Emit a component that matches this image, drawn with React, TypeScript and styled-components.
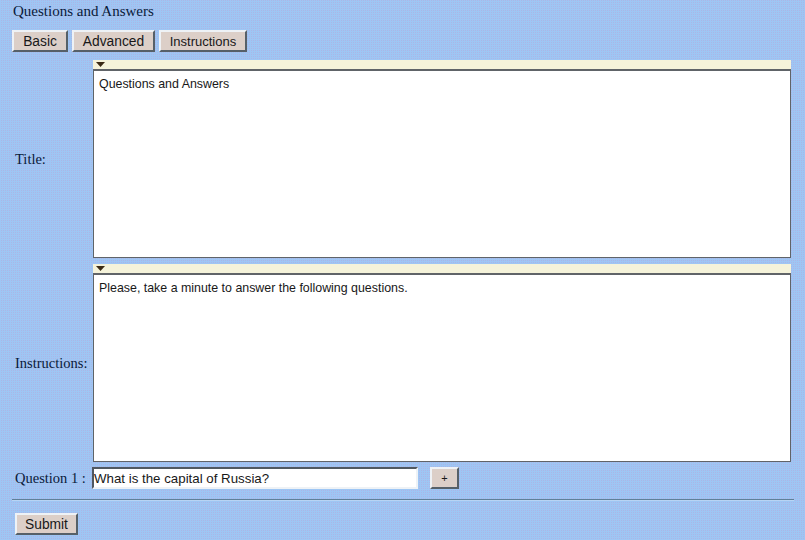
import React from "react";
import styled, { createGlobalStyle } from "styled-components";

const GlobalStyle = createGlobalStyle`
  html, body {
    margin: 0;
    padding: 0;
  }
  body {
    background-color: #9fc4f3;
    background-image: conic-gradient(#aab6e6 25%, #9ec6f4 0);
    background-size: 2px 2px;
    font-family: "Liberation Serif", serif;
    font-size: 14.5px;
    color: #0a1a3a;
  }
`;

const Page = styled.div`
  width: 805px;
  height: 540px;
  overflow: hidden;
  box-sizing: border-box;
  padding: 3px 11px 0 12px;
`;

const Heading = styled.div`
  height: 17px;
  line-height: 17px;
  padding-left: 1px;
  font-size: 15px;
`;

const Tabs = styled.div`
  display: flex;
  gap: 4px;
  margin-top: 10px;
`;

const Button = styled.button<{ $w: number; $fs?: number }>`
  width: ${(p) => p.$w}px;
  height: 22px;
  padding: 0;
  box-sizing: border-box;
  background: #dccfc8;
  border: 2px solid;
  border-color: #eef2f6 #566068 #566068 #eef2f6;
  font-family: "Liberation Sans", sans-serif;
  font-size: ${(p) => p.$fs ?? 13.5}px;
  color: #181818;
`;

const Row = styled.div<{ $top: number }>`
  display: flex;
  align-items: center;
  margin-top: ${(p) => p.$top}px;
`;

const Label = styled.div`
  width: 81px;
  padding: 1px 0 0 3px;
  box-sizing: border-box;
  white-space: nowrap;
`;

const Editor = styled.div`
  width: 698px;
  height: 198px;
  display: flex;
  flex-direction: column;
`;

const EditorBar = styled.div`
  height: 9px;
  flex: none;
  display: flex;
  align-items: center;
  padding-left: 3px;
  background: #f5f3da;
`;

const Editable = styled.div`
  flex: 1;
  background: #ffffff;
  border: 1px solid #606468;
  border-top-width: 2px;
  padding: 6px 5px;
  font-family: "Liberation Sans", sans-serif;
  font-size: 12.4px;
  line-height: 15px;
  color: #181818;
`;

const QuestionInput = styled.div`
  width: 326px;
  height: 22px;
  margin-left: -1px;
  box-sizing: border-box;
  background: #ffffff;
  border: 2px solid;
  border-color: #505860 #eef2f6 #eef2f6 #505860;
  font-family: "Liberation Sans", sans-serif;
  font-size: 13.3px;
  line-height: 19px;
  color: #181818;
  white-space: nowrap;
`;

const AddButton = styled(Button)`
  margin-left: 12px;
`;

const Rule = styled.hr`
  margin: 10px 0 0;
  height: 0;
  border: 0;
  border-top: 1px solid #5f8098;
  border-bottom: 1px solid #b8d4f4;
`;

const SubmitRow = styled.div`
  margin-top: 12px;
  padding-left: 3px;
`;

const Arrow = () => (
  <svg width="9" height="5" viewBox="0 0 9 5">
    <path d="M0 0h9L4.5 5z" fill="#3a2a14" />
  </svg>
);

const RichText = ({ text }: { text: string }) => (
  <Editor>
    <EditorBar>
      <Arrow />
    </EditorBar>
    <Editable>{text}</Editable>
  </Editor>
);

export default function App() {
  return (
    <>
      <GlobalStyle />
      <Page>
        <Heading>Questions and Answers</Heading>
        <Tabs>
          <Button $w={56} $fs={13.8}>Basic</Button>
          <Button $w={83} $fs={13.8}>Advanced</Button>
          <Button $w={88} $fs={13}>Instructions</Button>
        </Tabs>
        <Row $top={8}>
          <Label>Title:</Label>
          <RichText text="Questions and Answers" />
        </Row>
        <Row $top={6}>
          <Label>Instructions:</Label>
          <RichText text="Please, take a minute to answer the following questions." />
        </Row>
        <Row $top={5}>
          <Label>Question 1 :</Label>
          <QuestionInput>What is the capital of Russia?</QuestionInput>
          <AddButton $w={29} $fs={11}>+</AddButton>
        </Row>
        <Rule />
        <SubmitRow>
          <Button $w={63} $fs={13.8}>Submit</Button>
        </SubmitRow>
      </Page>
    </>
  );
}
